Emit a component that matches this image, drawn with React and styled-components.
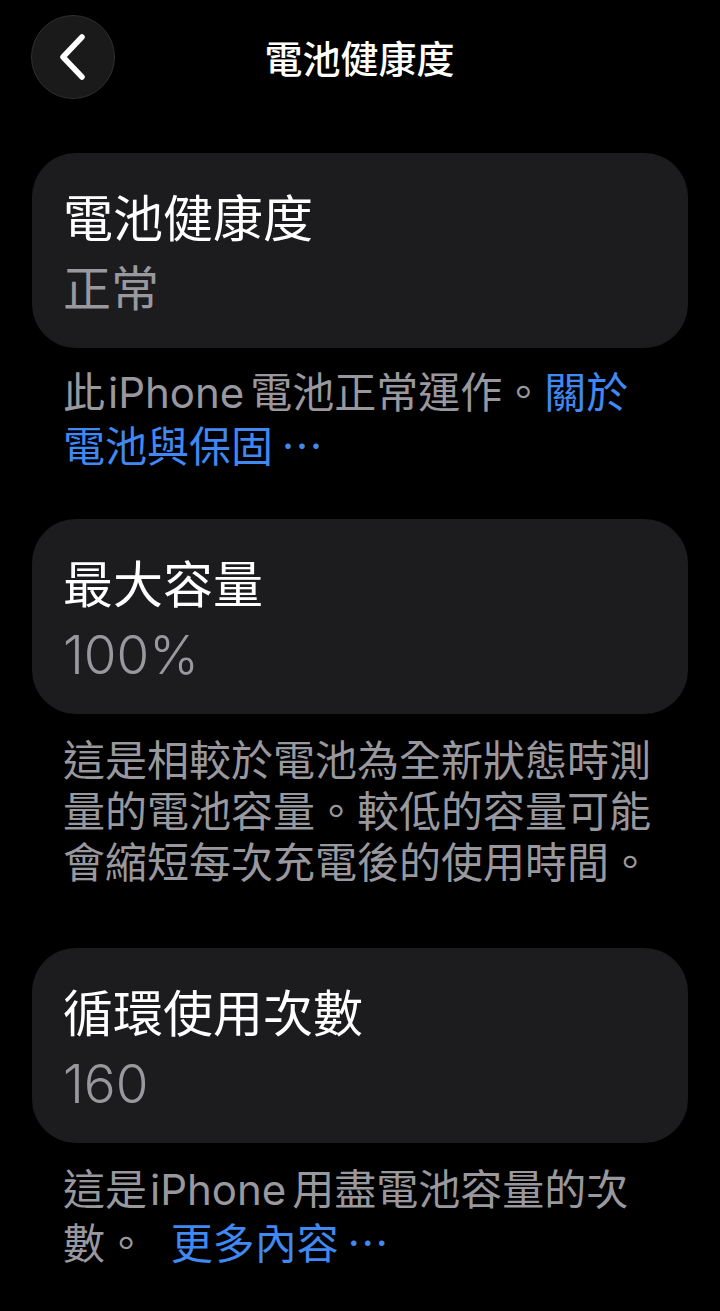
import React from "react";
import styled, { createGlobalStyle } from "styled-components";

const GlobalStyle = createGlobalStyle`
  body {
    margin: 0;
    background: #000;
    font-family: "Inter", "Noto Sans CJK TC", sans-serif;
    -webkit-font-smoothing: antialiased;
  }
`;

const Page = styled.div`
  min-height: 1311px;
  background: #000;
  padding: 15px 32px 0;
  box-sizing: border-box;
`;

const Header = styled.header`
  display: grid;
  grid-template-columns: 84px 1fr 84px;
  align-items: center;
  height: 84px;
  margin-left: -1px;
`;

const BackButton = styled.button`
  width: 84px;
  height: 84px;
  border-radius: 50%;
  background: #1a1a1b;
  border: 1.5px solid #2f2f31;
  display: flex;
  align-items: center;
  justify-content: center;
  padding: 0;
  cursor: pointer;
`;

const Title = styled.h1`
  margin: 0;
  text-align: center;
  color: #fff;
  font-family: "Noto Sans CJK TC", sans-serif;
  font-size: 38px;
  font-weight: 500;
  line-height: 1;
`;

const Section = styled.section`
  margin-top: ${(p) => (p.$first ? 54 : 0)}px;
`;

const Card = styled.div`
  background: #1c1c1e;
  border-radius: 44px;
  padding: 32px 31px 29px;
`;

const CardTitle = styled.div`
  color: #fff;
  font-family: "Noto Sans CJK TC", sans-serif;
  font-size: 50px;
  font-weight: 400;
  line-height: 60px;
`;

const CardValue = styled.div`
  margin-top: 14px;
  color: #98989e;
  font-size: ${(p) => (p.$latin ? 53 : 48)}px;
  font-weight: ${(p) => (p.$latin ? 300 : 400)};
  line-height: 60px;
`;

const Note = styled.p`
  margin: ${(p) => (p.$tight ? "19px 0 47px" : "21px 0 60px")};
  padding: 0 31px;
  color: #98989e;
  font-size: 42px;
  line-height: 51px;
`;

const Latin = styled.span`
  margin: 0 6px 0 3px;
`;

const Link = styled.a`
  color: #4088f2;
  text-decoration: none;
`;

const Dots = styled.span`
  margin-left: 8px;
  font-family: "Noto Sans CJK TC", "DejaVu Sans", sans-serif;
`;

const ChevronLeft = () => (
  <svg width="30" height="46" viewBox="0 0 30 46" fill="none">
    <path
      d="M24 3 L5 23 L24 43"
      stroke="#fff"
      strokeWidth="5.5"
      strokeLinecap="round"
      strokeLinejoin="round"
    />
  </svg>
);

const sections = [
  {
    title: "電池健康度",
    value: "正常",
    tight: true,
    note: (
      <>
        此<Latin>iPhone</Latin>電池正常運作。
        <Link>
          關於電池與保固<Dots>⋯</Dots>
        </Link>
      </>
    ),
  },
  {
    title: "最大容量",
    value: "100%",
    latin: true,
    note: "這是相較於電池為全新狀態時測量的電池容量。較低的容量可能會縮短每次充電後的使用時間。",
  },
  {
    title: "循環使用次數",
    value: "160",
    latin: true,
    note: (
      <>
        這是<Latin>iPhone</Latin>用盡電池容量的次數。{"\u00a0 "}
        <Link>
          更多內容<Dots>⋯</Dots>
        </Link>
      </>
    ),
  },
];

const App = () => (
  <>
    <GlobalStyle />
    <Page>
      <Header>
        <BackButton aria-label="返回">
          <ChevronLeft />
        </BackButton>
        <Title>電池健康度</Title>
        <div />
      </Header>

      {sections.map((s, i) => (
        <Section key={s.title} $first={i === 0}>
          <Card>
            <CardTitle>{s.title}</CardTitle>
            <CardValue $latin={s.latin}>{s.value}</CardValue>
          </Card>
          <Note $tight={s.tight}>{s.note}</Note>
        </Section>
      ))}
    </Page>
  </>
);

export default App;
